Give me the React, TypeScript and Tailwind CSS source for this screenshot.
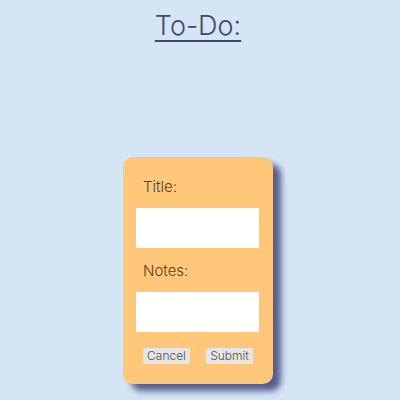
export default function App() {
    return (
        <main className="min-h-screen w-full bg-[#d5e5f5] pr-[4px] flex flex-col items-center font-['Inter',sans-serif] font-light">
            {/* Header */}
            <h1 className="mt-[8px] text-[27px] leading-[36px] text-[#3e4a6e] underline underline-offset-[5px] decoration-[1.5px]">To-Do:</h1>

            {/* Card */}
            <form className="mt-[113px] w-[150px] h-[227px] bg-[#ffc77a] rounded-[10px] shadow-[8px_7px_6px_#575c8c] px-[13px] pt-[21px] flex flex-col">
                <label className="pl-[7px] text-[15px] leading-[18px] text-[#5a3b1c]">Title:</label>
                <input className="mt-[12px] w-[123px] h-[40px] bg-white outline-none" />
                <label className="mt-[14px] pl-[7px] text-[15px] leading-[18px] text-[#5a3b1c]">Notes:</label>
                <textarea className="mt-[12px] w-[123px] h-[40px] bg-white outline-none resize-none" />
                <div className="mt-[16px] px-[7px] flex justify-between">
                    <button type="button" className="w-[47px] h-[16px] rounded-[3px] bg-[#e6e6e6] text-[12px] leading-[16px] text-[#505050]">Cancel</button>
                    <button type="button" className="w-[47px] h-[16px] rounded-[3px] bg-[#e6e6e6] text-[12px] leading-[16px] text-[#505050]">Submit</button>
                </div>
            </form>
        </main>
    );
}
